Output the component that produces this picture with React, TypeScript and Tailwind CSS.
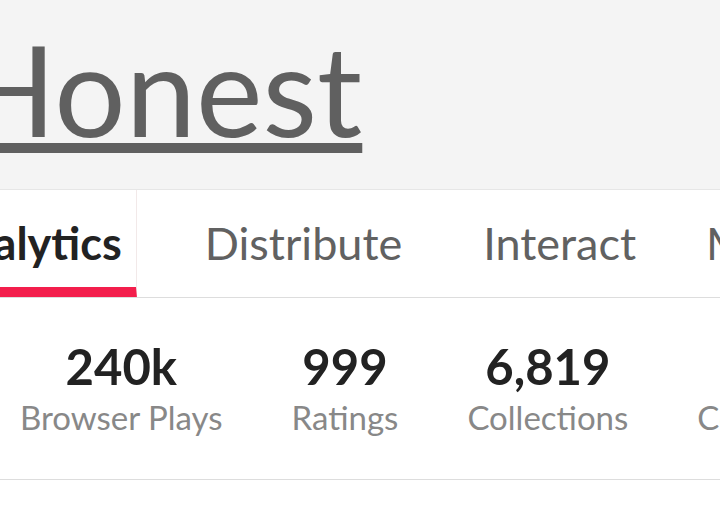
const stats = [
  { value: "240k", label: "Browser Plays" },
  { value: "999", label: "Ratings" },
  { value: "6,819", label: "Collections" },
  { value: "12", label: "Comments" },
];

export default function App() {
  return (
    <div className="w-[720px] h-[520px] overflow-hidden bg-white font-[Lato,sans-serif]">
      <header className="h-[190px] bg-[#f4f4f4] border-b border-[#e6e6e6] pt-[26px] overflow-hidden">
        <h1 className="ml-[-40px] whitespace-nowrap text-[126px] leading-none font-normal text-[#606060] underline decoration-[10px] underline-offset-[6px]">
          Honest
        </h1>
      </header>

      <nav className="h-[108px] flex border-b border-[#dddddd] whitespace-nowrap overflow-hidden">
        <div className="ml-[-77px] mb-[-1px] pl-[14px] pr-[14px] pt-[31px] border-r border-[#f2e9e9] border-b-[11px] border-b-[#f31e4c] text-[45px] leading-none font-bold text-[#222222]">
          Analytics
        </div>
        <div className="ml-[68px] pt-[31px] text-[45px] leading-none text-[#616161]">Distribute</div>
        <div className="ml-[81px] pt-[31px] text-[45px] leading-none text-[#616161]">Interact</div>
        <div className="ml-[70px] pt-[31px] text-[45px] leading-none text-[#616161]">Monetize</div>
      </nav>

      <section className="h-[182px] flex gap-[69px] pl-[20px] pt-[44px] border-b border-[#dddddd] whitespace-nowrap overflow-hidden">
        {stats.map((s) => (
          <div key={s.label} className="flex flex-col items-center">
            <div className="text-[49px] leading-none font-bold text-[#222222]">{s.value}</div>
            <div className="mt-[10px] text-[33px] leading-none text-[#888888]">{s.label}</div>
          </div>
        ))}
      </section>
    </div>
  );
}
